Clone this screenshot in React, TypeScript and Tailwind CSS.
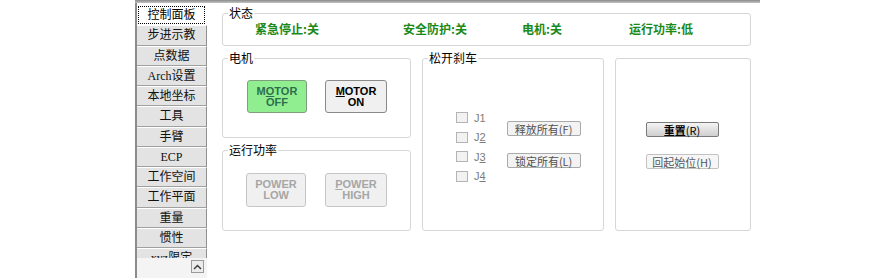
import React from "react";

const tabs = ["控制面板", "步进示教", "点数据", "Arch设置", "本地坐标", "工具", "手臂", "ECP", "工作空间", "工作平面", "重量", "惯性", "xyz限定"];

function Group({ title, className, children }: { title: string; className: string; children?: React.ReactNode }) {
  return (
    <fieldset className={"border border-[#d6d6d6] rounded-[3px] shrink-0 " + className}>
      <legend className="ml-[5px] px-[1px] text-[12px] leading-[14px] text-black">{title}</legend>
      {children}
    </fieldset>
  );
}

export default function App() {
  return (
    <div className="w-[893px] h-[278px] bg-white flex overflow-hidden font-['Noto_Sans_CJK_SC',sans-serif]">
      <div className="w-[135px] shrink-0" />
      <div className="w-[625px] shrink-0 flex flex-col">
        <div className="h-[3px] shrink-0 bg-gradient-to-b from-[#8a8a8a] to-[#c4c4c4]" />
        <div className="flex flex-1 min-h-0">
          {/* tab column */}
          <div className="w-[72px] shrink-0 border-l-2 border-l-[#8c8c8c] flex flex-col pt-[2px]">
            <div className="h-[253px] overflow-hidden flex flex-col font-['Liberation_Serif','Noto_Sans_CJK_SC',serif]">
              {tabs.map((t, i) =>
                i === 0 ? (
                  <div key={t} className="h-[20.25px] shrink-0 bg-white p-[1px] pr-[2px]">
                    <div className="h-full border border-dotted border-black flex items-center justify-center text-[12px] leading-[14px] text-black">{t}</div>
                  </div>
                ) : (
                  <div
                    key={t}
                    className="h-[20.25px] shrink-0 flex items-center justify-center bg-[#e3e3e3] border-t border-t-white border-b border-b-[#a0a0a0] border-r border-r-[#8f8f8f] text-[12px] leading-[14px] text-[#111]"
                  >
                    {t}
                  </div>
                )
              )}
            </div>
            <div className="flex-1 bg-[#f4f4f4] flex justify-end items-start pt-[2px] pr-[3px]">
              <div className="w-[13px] h-[13px] border border-[#9a9a9a] bg-[#ececec] flex items-center justify-center">
                <svg width="9" height="6" viewBox="0 0 9 6">
                  <path d="M1 5 L4.5 1.5 L8 5" fill="none" stroke="#404040" strokeWidth="1.5" />
                </svg>
              </div>
            </div>
          </div>

          {/* content */}
          <div className="flex flex-col pl-[15px] pt-[3px] gap-[5px]">
            <Group title="状态" className="w-[529px] h-[40px]">
              <div className="flex items-center pl-[32px] pt-[2px] text-[12px] leading-[14px] font-bold text-[#1a8a1a]">
                <span className="w-[148px]">紧急停止:关</span>
                <span className="w-[119px]">安全防护:关</span>
                <span className="w-[107px]">电机:关</span>
                <span>运行功率:低</span>
              </div>
            </Group>
            <div className="flex gap-[11px]">
              <div className="flex flex-col gap-[5px]">
                <Group title="电机" className="w-[189px] h-[87px]">
                  <div className="flex pl-[24px] pt-[15px] gap-[18px] font-['Liberation_Sans',sans-serif]">
                    <div className="w-[60px] h-[33px] bg-[#90ee90] border border-[#7e9e7e] rounded-[3px] flex flex-col items-center justify-center text-[11px] leading-[11px] font-bold text-[#2d6e4c]">
                      <span>M<span className="underline">O</span>TOR</span>
                      <span>OFF</span>
                    </div>
                    <div className="w-[62px] h-[33px] bg-[#f0f0f0] border border-[#8a8a8a] rounded-[3px] flex flex-col items-center justify-center text-[11px] leading-[11px] font-bold text-black">
                      <span><span className="underline">M</span>OTOR</span>
                      <span>ON</span>
                    </div>
                  </div>
                </Group>
                <Group title="运行功率" className="w-[189px] h-[88px]">
                  <div className="flex pl-[23px] pt-[16px] gap-[19px] font-['Liberation_Sans',sans-serif]">
                    <div className="w-[60px] h-[34px] bg-[#f0f0f0] border border-[#c6c6c6] rounded-[3px] flex flex-col items-center justify-center text-[11px] leading-[11px] font-bold text-[#a6a6a6]">
                      <span>POWER</span>
                      <span>LOW</span>
                    </div>
                    <div className="w-[62px] h-[34px] bg-[#f0f0f0] border border-[#c6c6c6] rounded-[3px] flex flex-col items-center justify-center text-[11px] leading-[11px] font-bold text-[#a6a6a6]">
                      <span><span className="underline">P</span>OWER</span>
                      <span>HIGH</span>
                    </div>
                  </div>
                </Group>
              </div>
              <Group title="松开刹车" className="w-[182px] h-[180px]">
                <div className="flex pl-[33px] pt-[43px] gap-[21px]">
                  <div className="flex flex-col">
                    {["1", "2", "3", "4"].map((n, i) => (
                      <div key={n} className="h-[19.5px] flex items-center gap-[6px] text-[11px] leading-[12px] text-[#7c7c7c] font-['Liberation_Sans',sans-serif]">
                        <div className="w-[12px] h-[11px] border border-[#b4b4b4] bg-[#f2f2f2]" />
                        <span>
                          J{i === 0 ? n : <span className="underline">{n}</span>}
                        </span>
                      </div>
                    ))}
                  </div>
                  <div className="flex flex-col gap-[17px] pt-[13px]">
                    <div className="w-[74px] h-[15px] bg-[#f3f3f3] border border-[#a9a9a9] rounded-[2px] flex items-center justify-center text-[11px] leading-[12px] text-[#505050]">释放所有(F)</div>
                    <div className="w-[74px] h-[15px] bg-[#f3f3f3] border border-[#a9a9a9] rounded-[2px] flex items-center justify-center text-[11px] leading-[12px] text-[#505050]">锁定所有(L)</div>
                  </div>
                </div>
              </Group>
              <div className="w-[136px] h-[180px] pt-[7px] shrink-0">
                <div className="h-full border border-[#d6d6d6] rounded-[3px] flex flex-col items-center pt-[63px] gap-[17px] pr-[2px]">
                  <div className="w-[73px] h-[15px] bg-gradient-to-b from-[#f4f4f4] to-[#cfcfcf] border border-[#7a7a7a] rounded-[2px] flex items-center justify-center text-[11px] leading-[12px] text-black">
                    <span className="font-bold">重置</span>(R)
                  </div>
                  <div className="w-[73px] h-[15px] bg-[#f6f6f6] border border-[#c2c2c2] rounded-[2px] flex items-center justify-center text-[11px] leading-[12px] text-[#585858]">回起始位(H)</div>
                </div>
              </div>
            </div>
          </div>
        </div>
      </div>
    </div>
  );
}
